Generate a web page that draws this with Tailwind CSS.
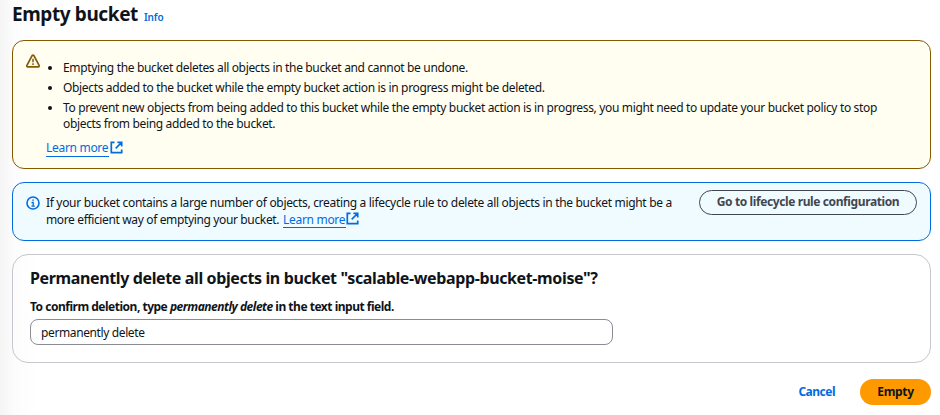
<!DOCTYPE html>
<html lang="en">
<head>
<meta charset="utf-8">
<title>Empty bucket</title>
<script src="https://cdn.jsdelivr.net/npm/@tailwindcss/browser@4"></script>
</head>
<body class="h-[415px] overflow-hidden bg-white bg-linear-to-r from-[#f5f5f5] via-[#fcfcfc] via-[14px] to-white to-[38px] pl-3 pr-[9px] font-['Noto_Sans','Liberation_Sans',sans-serif] text-[12px] leading-4 tracking-[-0.34px] text-[#0f141a]">
  <header class="flex h-10 items-baseline gap-[6px]">
    <h1 class="text-[19px] leading-7 font-bold tracking-[-0.4px]">Empty bucket</h1>
    <a class="text-[10px] font-semibold tracking-[-0.1px] text-[#006ce0]">Info</a>
  </header>

  <section class="flex h-[129px] rounded-xl border border-[#855900] bg-[#fffef0] pl-[13px]">
    <svg class="mt-[13px] h-[14px] w-[14px] shrink-0" viewBox="0 0 14 14" fill="none" stroke="#855900" stroke-width="1.7" stroke-linejoin="round"><path d="M6.1 1.6Q7 .7 7.9 1.6L13.2 11.6Q13.3 12.8 12.3 12.8H1.7Q.7 12.8.8 11.6Z"/><path d="M7 4.8v3.4M7 9.3v1.6" stroke-width="1.5"/></svg>
    <div class="ml-[6px] pt-[19px]">
      <ul class="flex w-[850px] list-disc flex-col gap-1 pl-[17px]">
        <li>Emptying the bucket deletes all objects in the bucket and cannot be undone.</li>
        <li>Objects added to the bucket while the empty bucket action is in progress might be deleted.</li>
        <li>To prevent new objects from being added to this bucket while the empty bucket action is in progress, you might need to update your bucket policy to stop<br>objects from being added to the bucket.</li>
      </ul>
      <a class="mt-2 flex h-[17px] items-start text-[#006ce0]"><span class="h-[17px] w-[63px] border-b border-[#006ce0] tracking-[-0.3px] whitespace-nowrap">Learn more</span><svg class="mt-[1px] ml-[1px] h-[13px] w-[13px]" viewBox="0 0 13 13" fill="none" stroke="#006ce0" stroke-width="1.7"><path d="M4.5 1.3H1.3v10.4h10.4V8.5M7.4 1.3h4.3v4.3M11.5 1.5 5.7 7.3"/></svg></a>
    </div>
  </section>

  <section class="mt-[13px] flex h-[59px] rounded-xl border border-[#006ce0] bg-[#f0fbff] pr-[13px] pl-[13px]">
    <svg class="mt-[13px] h-[14px] w-[14px] shrink-0" viewBox="0 0 14 14" fill="none" stroke="#006ce0" stroke-width="1.6"><circle cx="7" cy="7" r="6"/><path d="M5.5 6.5h1.7v3.6M5.4 10.2h3.4M6.3 4.2h1.6" stroke-width="1.3"/></svg>
    <div class="ml-[6px] w-[640px] pt-[11px] leading-[17px]">
      <p class="tracking-[-0.32px] whitespace-nowrap">If your bucket contains a large number of objects, creating a lifecycle rule to delete all objects in the bucket might be a</p>
      <p class="flex whitespace-nowrap"><span class="w-[237px] tracking-[-0.36px]">more efficient way of emptying your bucket.</span><a class="flex h-[17px] text-[#006ce0]"><span class="h-[17px] w-[63px] border-b border-[#006ce0] tracking-[-0.3px]">Learn more</span><svg class="mt-[1px] h-[13px] w-[13px]" viewBox="0 0 13 13" fill="none" stroke="#006ce0" stroke-width="1.7"><path d="M4.5 1.3H1.3v10.4h10.4V8.5M7.4 1.3h4.3v4.3M11.5 1.5 5.7 7.3"/></svg></a></p>
    </div>
    <button class="mt-[7px] ml-auto h-[25px] w-[218px] rounded-full border border-[#424650] pb-[1px] font-bold tracking-[-0.39px] whitespace-nowrap text-[#424650]">Go to lifecycle rule configuration</button>
  </section>

  <section class="mt-[13px] h-[109px] rounded-2xl border border-[#c6c6cd] pt-[11px] pl-[17px]">
    <h2 class="text-[16px] leading-6 font-bold tracking-[-0.37px]">Permanently delete all objects in bucket "scalable-webapp-bucket-moise"?</h2>
    <label class="mt-[9px] block font-bold tracking-[-0.49px]">To confirm deletion, type <i>permanently delete</i> in the text input field.</label>
    <input class="mt-[4px] block h-[26px] w-[583px] rounded-lg border border-[#8c8c94] bg-white px-[10px] tracking-[-0.38px]" value="permanently delete">
  </section>

  <footer class="mt-4 flex items-center justify-end gap-[25px] font-bold">
    <button class="tracking-[-0.5px] text-[#006ce0]">Cancel</button>
    <button class="h-[26px] w-[71px] rounded-full bg-[#ff9900]">Empty</button>
  </footer>
</body>
</html>
